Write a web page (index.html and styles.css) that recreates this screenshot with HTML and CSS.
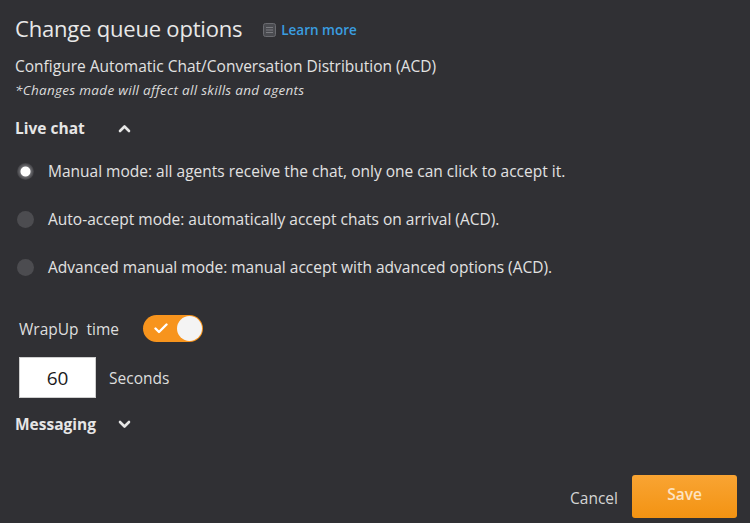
FILE: index.html
```html
<!DOCTYPE html>
<html>
<head>
<meta charset="utf-8">
<link rel="stylesheet" href="styles.css">
</head>
<body>
<div class="dialog">
  <div class="title-row">
    <h1 class="title">Change queue options</h1>
    <a class="learn">
      <svg class="doc-icon" width="13" height="14" viewBox="0 0 13 14"><rect x="0.5" y="0.5" width="12" height="13" rx="2" fill="#4a4b50" stroke="#6a6b70"/><path d="M3 4.5h7M3 7h7M3 9.5h7" stroke="#7a7b80" stroke-width="1"/></svg>
      <span>Learn more</span>
    </a>
  </div>
  <p class="subtitle">Configure Automatic Chat/Conversation Distribution (ACD)</p>
  <p class="note">*Changes made will affect all skills and agents</p>

  <div class="section-head">
    <span class="section-label">Live chat</span>
    <svg width="13" height="9" viewBox="0 0 13 9"><path d="M2 7 L6.5 2.5 L11 7" fill="none" stroke="#e6e6e6" stroke-width="2.6" stroke-linejoin="round" stroke-linecap="round"/></svg>
  </div>

  <div class="options">
    <div class="option"><span class="radio checked"></span><span>Manual mode: all agents receive the chat, only one can click to accept it.</span></div>
    <div class="option"><span class="radio"></span><span>Auto-accept mode: automatically accept chats on arrival (ACD).</span></div>
    <div class="option"><span class="radio"></span><span>Advanced manual mode: manual accept with advanced options (ACD).</span></div>
  </div>

  <div class="wrap-row">
    <span class="wrap-label">WrapUp&nbsp; time</span>
    <span class="toggle">
      <svg class="check" width="14" height="11" viewBox="0 0 14 11"><path d="M1.5 5.5 L5 9 L12.5 1.5" fill="none" stroke="#fff" stroke-width="2.4" stroke-linecap="round" stroke-linejoin="round"/></svg>
      <span class="knob"></span>
    </span>
  </div>

  <div class="seconds-row">
    <span class="num-box">60</span>
    <span class="seconds">Seconds</span>
  </div>

  <div class="section-head messaging">
    <span class="section-label">Messaging</span>
    <svg width="13" height="9" viewBox="0 0 13 9"><path d="M2 2 L6.5 6.5 L11 2" fill="none" stroke="#e6e6e6" stroke-width="2.6" stroke-linejoin="round" stroke-linecap="round"/></svg>
  </div>

  <div class="footer">
    <span class="cancel">Cancel</span>
    <span class="save">Save</span>
  </div>
</div>
</body>
</html>
```

FILE: styles.css
```css
html, body {
  margin: 0;
  padding: 0;
  background: #303034;
}
body {
  font-family: "Open Sans", "Noto Sans", sans-serif;
  color: #e4e4e4;
}
.dialog {
  width: 750px;
  height: 523px;
  box-sizing: border-box;
  padding: 14px 13px 0 15px;
  display: flex;
  flex-direction: column;
}
.title-row {
  display: flex;
  align-items: center;
  height: 28px;
}
.title {
  margin: 0;
  font-weight: 400;
  font-size: 22px;
  line-height: 28px;
  color: #e8e8e8;
  letter-spacing: -0.2px;
}
.learn {
  display: flex;
  align-items: center;
  margin-left: 21px;
  gap: 5px;
  color: #3a9ee0;
  font-size: 13.5px;
  font-weight: 600;
  margin-top: 3px;
}
.subtitle {
  margin: 14px 0 0;
  font-size: 15.5px;
  line-height: 20px;
  color: #e2e2e2;
}
.note {
  margin: 5px 0 0;
  font-size: 13.5px;
  line-height: 18px;
  font-style: italic;
  letter-spacing: 0.3px;
  color: #dcdcdc;
}
.section-head {
  display: flex;
  align-items: center;
  margin-top: 19px;
  height: 20px;
}
.section-label {
  width: 103px;
  font-size: 15.5px;
  font-weight: 700;
  color: #e6e6e6;
}
.options {
  margin-top: 9px;
  display: flex;
  flex-direction: column;
}
.option {
  height: 48px;
  display: flex;
  align-items: center;
  gap: 14px;
  padding-left: 2px;
  font-size: 15.5px;
  color: #e2e2e2;
}
.radio {
  width: 17px;
  height: 17px;
  border-radius: 50%;
  background: #4c4c50;
  flex: none;
}
.radio.checked {
  background: radial-gradient(circle, #ffffff 0 4.5px, #6a6a6e 5.5px, #3e3e42 8.5px);
}
.wrap-row {
  margin-top: 24px;
  display: flex;
  align-items: center;
  height: 27px;
  padding-left: 4px;
}
.wrap-label {
  width: 124px;
  font-size: 15.5px;
  color: #dedede;
}
.toggle {
  position: relative;
  width: 60px;
  height: 27px;
  border-radius: 14px;
  background: #f7941d;
  display: flex;
  align-items: center;
  box-sizing: border-box;
  padding-left: 11px;
}
.knob {
  position: absolute;
  right: 1px;
  top: 1px;
  width: 25px;
  height: 25px;
  border-radius: 50%;
  background: #f4f4f4;
}
.seconds-row {
  margin-top: 15px;
  display: flex;
  align-items: center;
  padding-left: 4px;
  gap: 13px;
}
.num-box {
  width: 77px;
  height: 41px;
  background: #ffffff;
  color: #1a1a1a;
  font-size: 19px;
  display: flex;
  align-items: center;
  justify-content: center;
  box-sizing: border-box;
  border: 1px solid #cfcfcf;
}
.seconds {
  font-size: 15.5px;
  color: #dedede;
}
.messaging {
  margin-top: 16px;
}
.footer {
  margin-top: 41px;
  display: flex;
  justify-content: flex-end;
  align-items: center;
  gap: 14px;
}
.cancel {
  font-size: 15.5px;
  color: #d4d4d4;
  margin-top: 2px;
}
.save {
  width: 105px;
  height: 43px;
  border-radius: 3px;
  background: linear-gradient(#f9a433, #f39312);
  color: #fde3c2;
  font-size: 15.5px;
  font-weight: 600;
  display: flex;
  align-items: center;
  justify-content: center;
  padding-bottom: 5px;
  box-sizing: border-box;
}
```
